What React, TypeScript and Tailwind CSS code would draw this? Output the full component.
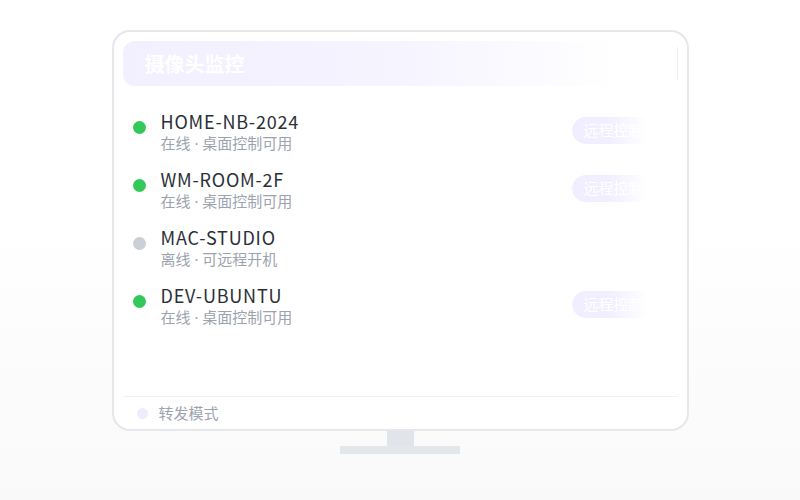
import React from 'react'

interface Device {
  name: string
  status: string
  online: boolean
}

const devices: Device[] = [
  { name: 'HOME-NB-2024', status: '在线 · 桌面控制可用', online: true },
  { name: 'WM-ROOM-2F', status: '在线 · 桌面控制可用', online: true },
  { name: 'MAC-STUDIO', status: '离线 · 可远程开机', online: false },
  { name: 'DEV-UBUNTU', status: '在线 · 桌面控制可用', online: true },
]

function DeviceRow({ d }: { d: Device }) {
  return (
    <div className="flex h-[58px] items-start">
      <div
        className={
          'ml-[10px] mt-[11px] h-[13px] w-[13px] shrink-0 rounded-full ' +
          (d.online ? 'bg-[#34c759]' : 'bg-[#cbd0d6]')
        }
      />
      <div className="ml-[15px] flex flex-col">
        <span className="font-['Noto_Sans_CJK_SC',sans-serif] text-[18px] leading-[22px] tracking-[0.8px] text-[#2b2f36]">
          {d.name}
        </span>
        <span className="text-[15px] leading-[22px] text-[#9ca3af]">{d.status}</span>
      </div>
      {d.online && (
        <div className="ml-auto mr-[26px] mt-[7px] flex h-[27px] w-[80px] items-center overflow-hidden rounded-full bg-[#f1eeff] pl-[12px] text-[15px] whitespace-nowrap text-white [mask-image:linear-gradient(to_right,black_45%,transparent_95%)]">
          远程控制
        </div>
      )}
    </div>
  )
}

export default function App() {
  return (
    <div className="flex h-[500px] w-[800px] flex-col items-center bg-[linear-gradient(to_bottom,#ffffff_45%,#f9f9fa)] pt-[30px] font-['Noto_Sans','Noto_Sans_CJK_SC',sans-serif]">
      <div className="flex h-[401px] w-[577px] flex-col rounded-[18px] border-2 border-[#e5e7eb] bg-white px-[9px] pt-[9px]">
        <div className="flex h-[45px] shrink-0 items-center justify-between rounded-[12px] bg-[linear-gradient(to_right,#f2efff,#f6f4ff_50%,#ffffff_90%)] pl-[22px]">
          <span className="mt-[2px] text-[20px] font-bold text-white">摄像头监控</span>
          <div className="h-[33px] w-px bg-[#eceef2]" />
        </div>

        <div className="mt-[24px] flex flex-1 flex-col">
          {devices.map((d) => (
            <DeviceRow key={d.name} d={d} />
          ))}
        </div>

        <div className="flex h-[33px] items-center border-t border-[#eef0f3]">
          <div className="ml-[14px] h-[11px] w-[11px] rounded-full bg-[#efecfd]" />
          <span className="ml-[11px] text-[15px] text-[#9ca3af]">转发模式</span>
        </div>
      </div>

      <div className="h-[15px] w-[27px] bg-[#e1e4e8]" />
      <div className="h-[8px] w-[120px] bg-[#e3e6ea]" />
    </div>
  )
}
